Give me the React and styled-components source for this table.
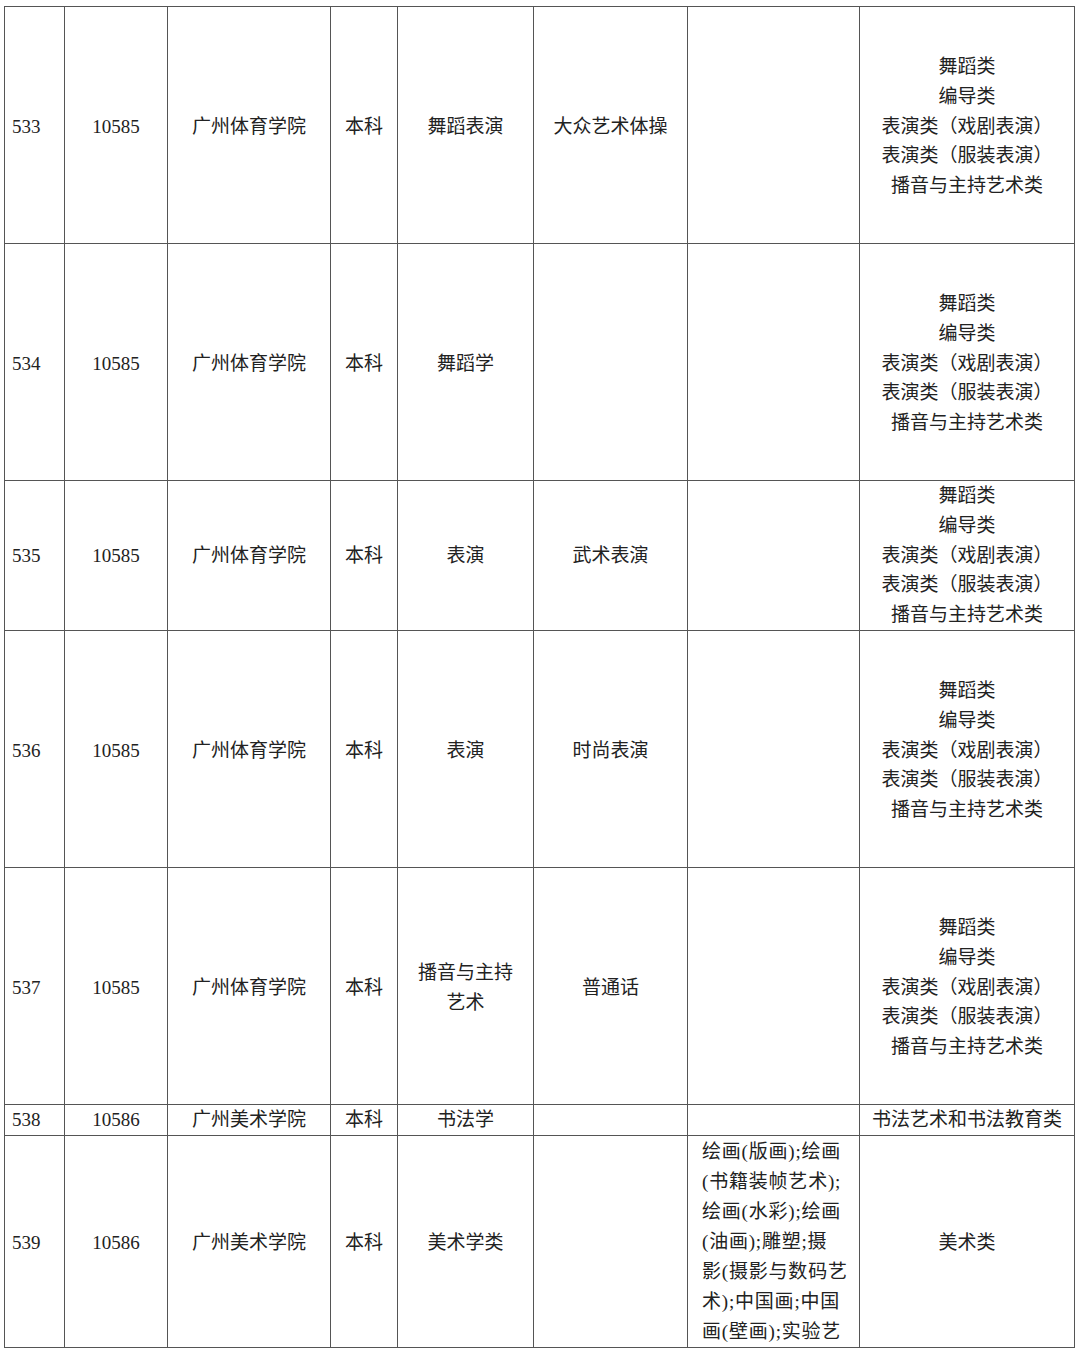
import React from "react";
import styled, { createGlobalStyle } from "styled-components";

const GlobalStyle = createGlobalStyle`
    html, body {
        margin: 0;
        padding: 0;
        background: #ffffff;
    }
    body {
        font-family: "Liberation Serif", "Noto Sans CJK SC", serif;
        color: #222222;
    }
`;

const Page = styled.div`
    width: 1080px;
    height: 1352px;
    padding: 6px 0 0 4px;
    box-sizing: border-box;
    overflow: hidden;
`;

const Table = styled.table`
    border-collapse: collapse;
    table-layout: fixed;
    width: 1070px;
    font-size: 19px;
    line-height: 29.8px;
`;

// tall rows sit their text a little low, like the source sheet
const shift = h => (h > 160 ? 3 : 0);

const Cell = styled.td`
    border: 1px solid #555555;
    padding: ${props => shift(props.$h)}px 4px 0;
    height: ${props => props.$h - shift(props.$h)}px;
    text-align: ${props => (props.$left ? "left" : "center")};
    vertical-align: middle;
    padding-left: ${props => (props.$left ? "7px" : "4px")};
    white-space: nowrap;
    overflow: hidden;
`;

const ArtCell = styled.td`
    border: 1px solid #555555;
    padding: 1px 0 0;
    vertical-align: top;
    overflow: hidden;
`;

const Clip = styled.div`
    height: 210px;
    overflow: hidden;
    padding: 0 0 0 14px;
    text-align: left;
    line-height: 30px;
    letter-spacing: 0.8px;
    white-space: nowrap;
`;

const widths = [60, 103, 163, 67, 136, 154, 172, 215];

const perform = [
    "舞蹈类",
    "编导类",
    "表演类（戏剧表演）",
    "表演类（服装表演）",
    "播音与主持艺术类",
];

const rows = [
    { no: "533", code: "10585", school: "广州体育学院", level: "本科", major: ["舞蹈表演"], dir: "大众艺术体操", h: 236, cat: perform },
    { no: "534", code: "10585", school: "广州体育学院", level: "本科", major: ["舞蹈学"], dir: "", h: 236, cat: perform },
    { no: "535", code: "10585", school: "广州体育学院", level: "本科", major: ["表演"], dir: "武术表演", h: 149, cat: perform },
    { no: "536", code: "10585", school: "广州体育学院", level: "本科", major: ["表演"], dir: "时尚表演", h: 236, cat: perform },
    { no: "537", code: "10585", school: "广州体育学院", level: "本科", major: ["播音与主持", "艺术"], dir: "普通话", h: 236, cat: perform },
    { no: "538", code: "10586", school: "广州美术学院", level: "本科", major: ["书法学"], dir: "", h: 30, cat: ["书法艺术和书法教育类"] },
];

const artLines = [
    "绘画(版画);绘画",
    "(书籍装帧艺术);",
    "绘画(水彩);绘画",
    "(油画);雕塑;摄",
    "影(摄影与数码艺",
    "术);中国画;中国",
    "画(壁画);实验艺",
];

const Lines = ({ items }) => (
    <>
        {items.map((t, i) => (
            <div key={i}>{t}</div>
        ))}
    </>
);

const App = () => {
    return (
        <>
            <GlobalStyle />
            <Page>
                <Table>
                    <colgroup>
                        {widths.map((w, i) => (
                            <col key={i} style={{ width: w }} />
                        ))}
                    </colgroup>
                    <tbody>
                        {rows.map(r => (
                            <tr key={r.no}>
                                <Cell $h={r.h} $left>{r.no}</Cell>
                                <Cell $h={r.h}>{r.code}</Cell>
                                <Cell $h={r.h}>{r.school}</Cell>
                                <Cell $h={r.h}>{r.level}</Cell>
                                <Cell $h={r.h}><Lines items={r.major} /></Cell>
                                <Cell $h={r.h}>{r.dir}</Cell>
                                <Cell $h={r.h}></Cell>
                                <Cell $h={r.h}><Lines items={r.cat} /></Cell>
                            </tr>
                        ))}
                        <tr>
                            <Cell $h={211} $left>539</Cell>
                            <Cell $h={211}>10586</Cell>
                            <Cell $h={211}>广州美术学院</Cell>
                            <Cell $h={211}>本科</Cell>
                            <Cell $h={211}>美术学类</Cell>
                            <Cell $h={211}></Cell>
                            <ArtCell>
                                <Clip>
                                    <Lines items={artLines} />
                                </Clip>
                            </ArtCell>
                            <Cell $h={211}>美术类</Cell>
                        </tr>
                    </tbody>
                </Table>
            </Page>
        </>
    );
};

export default App;
